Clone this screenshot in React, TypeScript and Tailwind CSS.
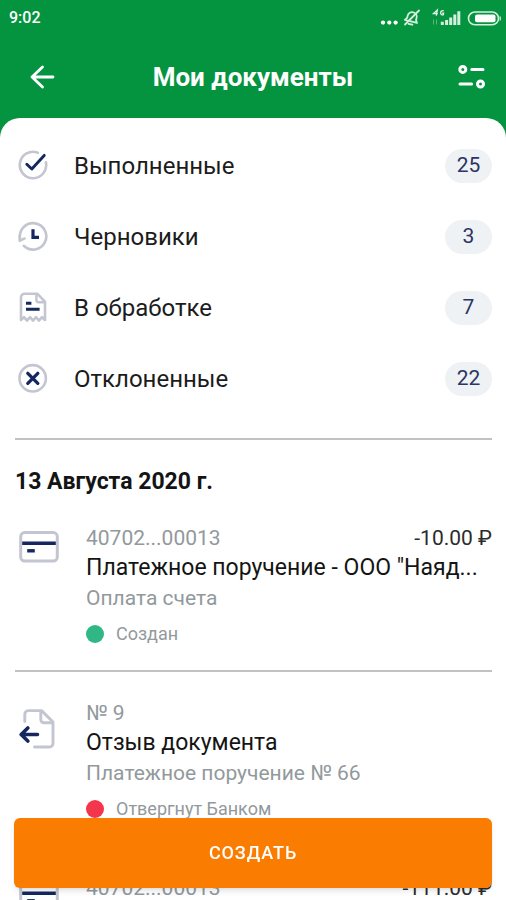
import React from 'react'

type IconProps = { className?: string }

const GREY = '#c3c6d0'
const NAVY = '#14275e'

function DoneIcon({ className }: IconProps) {
  return (
    <svg className={className} viewBox="0 0 32 32" fill="none" aria-hidden="true">
      <path d="M20.8 2.7A13.2 13.2 0 1 0 28.9 12.2" stroke={GREY} strokeWidth="2.6" strokeLinecap="round" />
      <path d="M9.8 14.2l5 4.8L27.2 5.4" stroke={NAVY} strokeWidth="2.9" strokeLinecap="round" strokeLinejoin="round" />
    </svg>
  )
}

function DraftIcon({ className }: IconProps) {
  return (
    <svg className={className} viewBox="0 0 32 32" fill="none" aria-hidden="true">
      <path d="M3 17.3A13.2 13.2 0 1 1 6.8 24.8" stroke={GREY} strokeWidth="2.6" strokeLinecap="round" />
      <path d="M2.6 14.6v5.2l5-2.4" stroke={GREY} strokeWidth="2.4" strokeLinecap="round" strokeLinejoin="round" />
      <path d="M16 8.2v8.2h6" stroke={NAVY} strokeWidth="3.2" />
    </svg>
  )
}

function ProcessingIcon({ className }: IconProps) {
  return (
    <svg className={className} viewBox="0 0 32 32" fill="none" aria-hidden="true">
      <path
        d="M4 28V5.2a3.4 3.4 0 0 1 3.4-3.4H20.4L28 9.6V28l-3-2.8-3 3.4-3-3.4-3 3.4-3-3.4-3 3.4-3-3.4z"
        stroke={GREY}
        strokeWidth="2.6"
        strokeLinejoin="round"
      />
      <path d="M19.4 2.6v5.4a2.2 2.2 0 0 0 2.2 2.2h5.8" stroke={GREY} strokeWidth="2.4" />
      <path d="M9 11.3h5.4M9 17.3h13.6" stroke={NAVY} strokeWidth="2.9" />
    </svg>
  )
}

function RejectedIcon({ className }: IconProps) {
  return (
    <svg className={className} viewBox="0 0 32 32" fill="none" aria-hidden="true">
      <circle cx="15.7" cy="15.3" r="13.2" stroke={GREY} strokeWidth="2.6" />
      <path d="M10.8 10.3l10 10M20.8 10.3l-10 10" stroke={NAVY} strokeWidth="3.3" strokeLinecap="round" />
    </svg>
  )
}

function CardIcon({ className }: IconProps) {
  return (
    <svg className={className} viewBox="0 0 40 46" fill="none" aria-hidden="true">
      <rect x="1.7" y="4.6" width="36.6" height="28.5" rx="4" stroke={GREY} strokeWidth="3" />
      <path d="M3.2 15.2h33.6" stroke={NAVY} strokeWidth="3.6" />
      <path d="M8.2 22.8h7.6" stroke={NAVY} strokeWidth="3.4" />
    </svg>
  )
}

function RecallIcon({ className }: IconProps) {
  return (
    <svg className={className} viewBox="0 0 40 46" fill="none" aria-hidden="true">
      <path
        d="M5.8 18.5V11.2A3.4 3.4 0 0 1 9.2 7.600H22.6L34 19V40.4A3.6 3.6 0 0 1 30.4 44H15.5"
        stroke={GREY}
        strokeWidth="2.9"
        strokeLinecap="round"
        strokeLinejoin="round"
      />
      <path d="M21.8 8.2v8.4a3.2 3.2 0 0 0 3.2 3.2H33" stroke={GREY} strokeWidth="2.9" />
      <path d="M18.5 31.5H2.5M8.8 25l-6.6 6.5L8.8 38" stroke={NAVY} strokeWidth="3.6" strokeLinecap="round" strokeLinejoin="round" />
    </svg>
  )
}

const FOLDERS = [
  { title: 'Выполненные', count: 25, icon: DoneIcon },
  { title: 'Черновики', count: 3, icon: DraftIcon },
  { title: 'В обработке', count: 7, icon: ProcessingIcon },
  { title: 'Отклоненные', count: 22, icon: RejectedIcon },
]

const DOCUMENTS = [
  {
    number: '40702...00013',
    amount: '-10.00 ₽',
    title: 'Платежное поручение - ООО "Наяд...',
    note: 'Оплата счета',
    status: 'Создан',
    dot: 'bg-[#2fb886]',
    icon: CardIcon,
  },
  {
    number: '№ 9',
    amount: '',
    title: 'Отзыв документа',
    note: 'Платежное поручение № 66',
    status: 'Отвергнут Банком',
    dot: 'bg-[#f4364c]',
    icon: RecallIcon,
  },
  {
    number: '40702...00013',
    amount: '-111.00 ₽',
    title: 'Платежное поручение',
    note: 'Оплата счета',
    status: 'Создан',
    dot: 'bg-[#2fb886]',
    icon: CardIcon,
  },
]

function StatusBar() {
  return (
    <div className="flex h-9 items-center justify-between pr-1 pl-[9px]">
      <span className="text-base font-medium">9:02</span>
      <svg className="h-5 w-[124px]" viewBox="0 0 124 20" fill="none" aria-hidden="true">
        {/* more notifications */}
        <circle cx="5" cy="14.6" r="2.1" fill="#fff" />
        <circle cx="11.3" cy="14.6" r="2.1" fill="#fff" />
        <circle cx="17.6" cy="14.6" r="2.1" fill="#fff" />
        {/* muted bell */}
        <g stroke="#d6efdd" strokeWidth="1.8" strokeLinecap="round" strokeLinejoin="round">
          <path d="M27.5 13.4h12.500l-1.600-2.600V8.500a4.600 4.600 0 0 0-9.200 0v2.300zM32 16.200h4" transform="rotate(14 33 10)" />
          <path d="M27 16.500L41 2.500" />
        </g>
        {/* mobile network */}
        <path d="M58.3 7.6L59.3 2l-3.900 3.700h4.400M65.800 3a2.100 2.100 0 1 0-.5 3.800l.3-1.700h-1.500" stroke="#e3f4e8" strokeWidth="1.3" />
        <path d="M55.5 16.5v-5M58.5 11.500v5" stroke="#5db67a" strokeWidth="1" />
        <path d="M64.3 17v-3.200M68.600 17v-5M72.700 17V9.500M76.800 17V6.500M80.800 17V3.200" stroke="#d6efdd" strokeWidth="3" />
        {/* battery */}
        <rect x="90.5" y="4" width="30" height="12.8" rx="6.4" stroke="#d6efdd" strokeWidth="1.6" />
        <rect x="97" y="6.5" width="20.5" height="7.8" rx="2" fill="#fff" />
        <path d="M122.2 8.4v4" stroke="#d6efdd" strokeWidth="1.2" />
      </svg>
    </div>
  )
}

function Header() {
  return (
    <header className="text-white">
      <StatusBar />
      <div className="flex h-[82px] items-center justify-between px-5">
        <button type="button" aria-label="Назад" className="flex h-11 w-11 items-center justify-center">
          <svg className="h-7 w-7" viewBox="0 0 28 28" fill="none" aria-hidden="true">
            <path d="M25 14H4M14.5 4L4 14l10.5 10" stroke="#fff" strokeWidth="2.8" strokeLinecap="round" strokeLinejoin="round" />
          </svg>
        </button>
        <h1 className="text-[26px] leading-8 font-bold">Мои документы</h1>
        <button type="button" aria-label="Фильтр" className="flex h-11 w-11 items-center justify-end">
          <svg className="h-7 w-7" viewBox="0 0 28 28" fill="none" aria-hidden="true">
            <g stroke="#fff" strokeWidth="3" strokeLinecap="round">
              <circle cx="4.8" cy="6.4" r="3" />
              <path d="M13.8 6.4h11.2M2 21h11.6" />
              <circle cx="22.5" cy="21" r="3" />
            </g>
          </svg>
        </button>
      </div>
    </header>
  )
}

export default function App() {
  return (
    <div className="flex h-screen flex-col overflow-hidden bg-[#049440] font-[Roboto,sans-serif]">
      <Header />

      <main className="min-h-0 flex-1 overflow-hidden rounded-t-[20px] bg-white pt-3 pr-[14px] pl-[15px]">
        <nav className="pb-6">
          {FOLDERS.map(({ title, count, icon: Icon }) => (
            <a key={title} href="#" className="flex h-[71px] items-center">
              <Icon className="ml-[2px] h-8 w-8" />
              <span className="ml-[25px] flex-1 text-2xl text-[#1c1c1c]">{title}</span>
              <span className="flex h-[34px] w-[47px] items-center justify-center rounded-full bg-[#eff2f4] text-[21px] text-[#2c3563]">
                {count}
              </span>
            </a>
          ))}
        </nav>

        <section className="border-t-2 border-[#bfc3c5] pt-7">
          <h2 className="pb-px text-[23px] leading-7 font-bold text-[#141414]">13 Августа 2020 г.</h2>

          {DOCUMENTS.map(({ icon: Icon, ...doc }, i) => (
            <article key={i} className="flex border-b-2 border-[#bfc3c5] pt-[27px] pb-6">
              <Icon className="mt-1 ml-1 h-[46px] w-10 shrink-0" />
              <div className="ml-[27px] min-w-0 flex-1">
                <div className="flex justify-between text-[21px] leading-7">
                  <span className="text-[#92999c]">{doc.number}</span>
                  <span className="text-[#2b2b2b]">{doc.amount}</span>
                </div>
                <h3 className="truncate text-[23px] leading-8 text-[#141414]">{doc.title}</h3>
                <p className="text-[21px] leading-7 text-[#92999c]">{doc.note}</p>
                <div className="mt-[10px] flex items-center gap-3 text-lg leading-6 text-[#92999c]">
                  <span className={`h-[18px] w-[18px] rounded-full ${doc.dot}`}></span>
                  {doc.status}
                </div>
              </div>
            </article>
          ))}
        </section>
      </main>

      <div className="fixed inset-x-0 bottom-3 px-[14px]">
        <button
          type="button"
          className="h-[70px] w-full rounded-md bg-[#fa7c00] text-lg font-medium tracking-wider text-white shadow-md"
        >
          СОЗДАТЬ
        </button>
      </div>
    </div>
  )
}
